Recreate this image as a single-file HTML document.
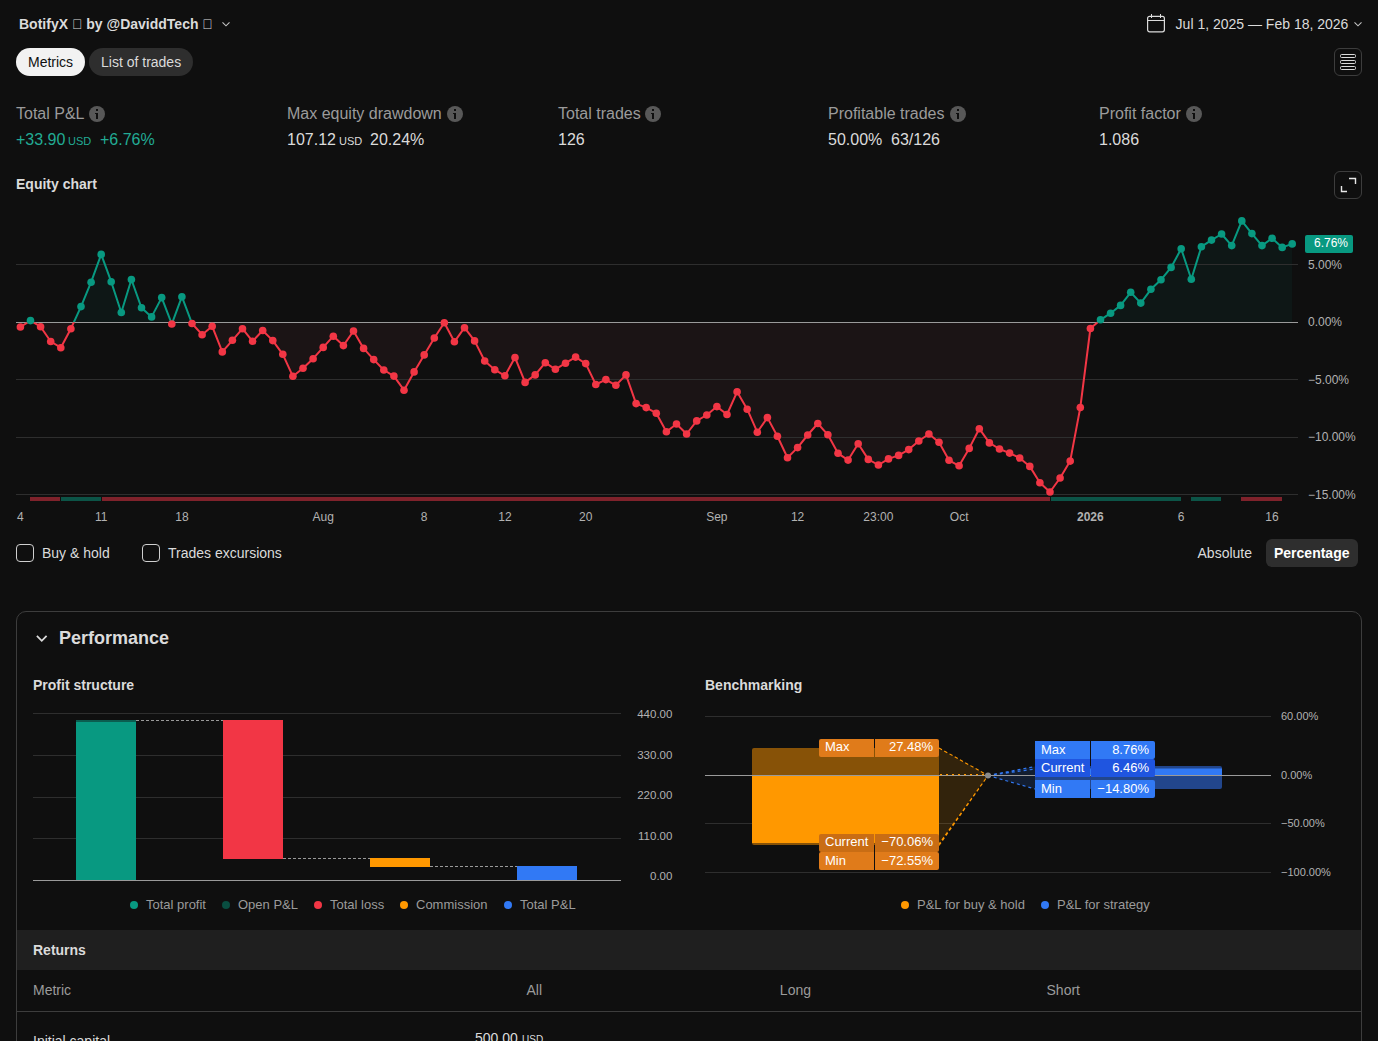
<!DOCTYPE html>
<html><head><meta charset="utf-8"><style>
html,body{margin:0;padding:0;background:#0f0f0f;width:1378px;height:1041px;overflow:hidden;position:relative}
body{font-family:"Liberation Sans",sans-serif}
.a{position:absolute;box-sizing:content-box}
.t{position:absolute;line-height:1;white-space:nowrap}
svg.a{overflow:visible}
</style></head><body>
<div class="t" style="left:19px;top:16.85px;font-size:14px;color:#dbdbdb;font-weight:bold;">BotifyX &#xFFFF; by @DaviddTech &#xFFFF;</div>
<svg class="a" style="left:220px;top:18px" width="12" height="12" viewBox="0 0 12 12"><path d="M2.5 4.3 L6 7.8 L9.5 4.3" fill="none" stroke="#c4c4c4" stroke-width="1.1"/></svg>
<svg class="a" style="left:1146px;top:13px" width="20" height="20" viewBox="0 0 20 20"><rect x="1.6" y="3.4" width="16.8" height="15.4" rx="2" fill="none" stroke="#dbdbdb" stroke-width="1.2"/><path d="M1.5 7.5H18.5M5.5 1V5M14.5 1V5" stroke="#dbdbdb" stroke-width="1"/></svg>
<div class="t" style="left:1175.6px;top:16.85px;font-size:14px;color:#dbdbdb;font-weight:normal;">Jul 1, 2025 — Feb 18, 2026</div>
<svg class="a" style="left:1352px;top:18px" width="12" height="12" viewBox="0 0 12 12"><path d="M2.5 4.3 L6 7.8 L9.5 4.3" fill="none" stroke="#c4c4c4" stroke-width="1.1"/></svg>
<div class="a" style="left:16px;top:48px;width:69px;height:28px;border-radius:14px;background:#f2f2f2"></div>
<div class="t" style="left:28px;top:55.05px;font-size:14px;color:#0f0f0f;font-weight:normal;">Metrics</div>
<div class="a" style="left:89px;top:48px;width:104px;height:28px;border-radius:14px;background:#2e2e2e"></div>
<div class="t" style="left:101px;top:55.05px;font-size:14px;color:#dbdbdb;font-weight:normal;">List of trades</div>
<div class="a" style="left:1334px;top:48px;width:26px;height:26px;border-radius:6px;border:1px solid #3d3d3d"></div>
<svg class="a" style="left:1338px;top:52px" width="20" height="20" viewBox="0 0 20 20"><rect x="2.5" y="2.5" width="15" height="3" rx="1" fill="none" stroke="#dbdbdb" stroke-width="1"/><rect x="2.5" y="8.5" width="15" height="3" rx="1" fill="none" stroke="#dbdbdb" stroke-width="1"/><rect x="2.5" y="14.5" width="15" height="3" rx="1" fill="none" stroke="#dbdbdb" stroke-width="1"/></svg>
<div class="t" style="left:16px;top:106.46px;font-size:16px;color:#9b9b9b;font-weight:normal;">Total P&amp;L</div>
<svg class="a" style="left:89px;top:106px" width="16" height="16" viewBox="0 0 16 16"><circle cx="8" cy="8" r="8" fill="#585858"/><rect x="7" y="3" width="2" height="2" fill="#0f0f0f"/><path d="M6 7H9V13H7V8H6Z" fill="#0f0f0f"/></svg>
<div class="t" style="left:287px;top:106.46px;font-size:16px;color:#9b9b9b;font-weight:normal;">Max equity drawdown</div>
<svg class="a" style="left:447px;top:106px" width="16" height="16" viewBox="0 0 16 16"><circle cx="8" cy="8" r="8" fill="#585858"/><rect x="7" y="3" width="2" height="2" fill="#0f0f0f"/><path d="M6 7H9V13H7V8H6Z" fill="#0f0f0f"/></svg>
<div class="t" style="left:558px;top:106.46px;font-size:16px;color:#9b9b9b;font-weight:normal;">Total trades</div>
<svg class="a" style="left:645px;top:106px" width="16" height="16" viewBox="0 0 16 16"><circle cx="8" cy="8" r="8" fill="#585858"/><rect x="7" y="3" width="2" height="2" fill="#0f0f0f"/><path d="M6 7H9V13H7V8H6Z" fill="#0f0f0f"/></svg>
<div class="t" style="left:828px;top:106.46px;font-size:16px;color:#9b9b9b;font-weight:normal;">Profitable trades</div>
<svg class="a" style="left:950px;top:106px" width="16" height="16" viewBox="0 0 16 16"><circle cx="8" cy="8" r="8" fill="#585858"/><rect x="7" y="3" width="2" height="2" fill="#0f0f0f"/><path d="M6 7H9V13H7V8H6Z" fill="#0f0f0f"/></svg>
<div class="t" style="left:1099px;top:106.46px;font-size:16px;color:#9b9b9b;font-weight:normal;">Profit factor</div>
<svg class="a" style="left:1186px;top:106px" width="16" height="16" viewBox="0 0 16 16"><circle cx="8" cy="8" r="8" fill="#585858"/><rect x="7" y="3" width="2" height="2" fill="#0f0f0f"/><path d="M6 7H9V13H7V8H6Z" fill="#0f0f0f"/></svg>
<div class="t" style="left:16px;top:132.46px;font-size:16px;color:#22ab94;font-weight:normal;">+33.90</div>
<div class="t" style="left:68px;top:135.69px;font-size:11px;color:#22ab94;font-weight:normal;">USD</div>
<div class="t" style="left:100px;top:132.46px;font-size:16px;color:#22ab94;font-weight:normal;">+6.76%</div>
<div class="t" style="left:287px;top:132.46px;font-size:16px;color:#dbdbdb;font-weight:normal;">107.12</div>
<div class="t" style="left:339px;top:135.69px;font-size:11px;color:#dbdbdb;font-weight:normal;">USD</div>
<div class="t" style="left:370px;top:132.46px;font-size:16px;color:#dbdbdb;font-weight:normal;">20.24%</div>
<div class="t" style="left:558px;top:132.46px;font-size:16px;color:#dbdbdb;font-weight:normal;">126</div>
<div class="t" style="left:828px;top:132.46px;font-size:16px;color:#dbdbdb;font-weight:normal;">50.00%</div>
<div class="t" style="left:891px;top:132.46px;font-size:16px;color:#dbdbdb;font-weight:normal;">63/126</div>
<div class="t" style="left:1099px;top:132.46px;font-size:16px;color:#dbdbdb;font-weight:normal;">1.086</div>
<div class="t" style="left:16px;top:177.15px;font-size:14px;color:#dbdbdb;font-weight:bold;">Equity chart</div>
<div class="a" style="left:1334px;top:171px;width:26px;height:26px;border-radius:6px;border:1px solid #3d3d3d"></div>
<svg class="a" style="left:1338px;top:175px" width="20" height="20" viewBox="0 0 20 20"><path d="M11 3.5H17.5V9M3.5 11V16.5H9" fill="none" stroke="#e8e8e8" stroke-width="1.4"/></svg>
<svg class="a" style="left:0;top:0" width="1378" height="540" viewBox="0 0 1378 540">
<defs>
<clipPath id="up"><rect x="0" y="0" width="1378" height="322.3"/></clipPath>
<clipPath id="dn"><rect x="0" y="322.3" width="1378" height="300"/></clipPath>
</defs>
<polygon points="20.4,322.3 20.4,327.0 30.5,320.6 40.6,326.7 50.7,341.5 60.8,347.7 70.9,328.7 81.0,306.6 91.1,282.2 101.2,254.4 111.2,281.7 121.3,312.5 131.4,279.5 141.5,307.8 151.6,316.9 161.7,297.6 171.8,324.0 181.9,296.7 192.0,323.5 202.1,334.7 212.2,326.3 222.3,351.9 232.4,340.3 242.5,328.7 252.6,341.3 262.7,330.5 272.8,340.6 282.8,354.3 292.9,376.3 303.0,368.3 313.1,358.7 323.2,347.4 333.3,336.2 343.4,345.6 353.5,331.0 363.6,348.4 373.7,359.6 383.8,370.0 393.9,376.1 404.0,390.2 414.1,371.9 424.2,354.9 434.3,338.0 444.3,322.8 454.4,341.8 464.5,327.7 474.6,340.9 484.7,361.0 494.8,369.7 504.9,375.8 515.0,357.5 525.1,382.4 535.2,374.9 545.3,362.7 555.4,369.3 565.5,363.2 575.6,357.1 585.7,363.6 595.8,384.5 605.9,379.6 615.9,385.3 626.0,374.9 636.1,403.6 646.2,407.6 656.3,413.2 666.4,431.8 676.5,424.0 686.6,434.0 696.7,420.9 706.8,415.0 716.9,406.6 727.0,414.5 737.1,391.8 747.2,409.2 757.3,432.2 767.4,417.6 777.4,436.2 787.5,457.7 797.6,447.6 807.7,435.0 817.8,423.5 827.9,434.8 838.0,453.3 848.1,460.1 858.2,443.7 868.3,459.4 878.4,465.0 888.5,458.9 898.6,455.4 908.7,449.6 918.8,441.0 928.9,434.0 939.0,442.3 949.0,460.3 959.1,465.8 969.2,448.4 979.3,428.7 989.4,442.9 999.5,449.0 1009.6,453.1 1019.7,458.0 1029.8,466.4 1039.9,482.7 1050.0,492.0 1060.1,478.0 1070.2,461.1 1080.3,407.5 1090.4,328.5 1100.5,319.8 1110.6,313.2 1120.6,305.4 1130.7,292.3 1140.8,303.1 1150.9,289.3 1161.0,279.8 1171.1,267.4 1181.2,248.8 1191.3,279.2 1201.4,246.7 1211.5,240.1 1221.6,234.0 1231.7,245.6 1241.8,220.9 1251.9,233.6 1262.0,245.6 1272.1,238.3 1282.2,247.4 1292.2,243.9 1292.2,322.3" fill="rgba(8,153,129,0.06)" clip-path="url(#up)"/>
<polygon points="20.4,322.3 20.4,327.0 30.5,320.6 40.6,326.7 50.7,341.5 60.8,347.7 70.9,328.7 81.0,306.6 91.1,282.2 101.2,254.4 111.2,281.7 121.3,312.5 131.4,279.5 141.5,307.8 151.6,316.9 161.7,297.6 171.8,324.0 181.9,296.7 192.0,323.5 202.1,334.7 212.2,326.3 222.3,351.9 232.4,340.3 242.5,328.7 252.6,341.3 262.7,330.5 272.8,340.6 282.8,354.3 292.9,376.3 303.0,368.3 313.1,358.7 323.2,347.4 333.3,336.2 343.4,345.6 353.5,331.0 363.6,348.4 373.7,359.6 383.8,370.0 393.9,376.1 404.0,390.2 414.1,371.9 424.2,354.9 434.3,338.0 444.3,322.8 454.4,341.8 464.5,327.7 474.6,340.9 484.7,361.0 494.8,369.7 504.9,375.8 515.0,357.5 525.1,382.4 535.2,374.9 545.3,362.7 555.4,369.3 565.5,363.2 575.6,357.1 585.7,363.6 595.8,384.5 605.9,379.6 615.9,385.3 626.0,374.9 636.1,403.6 646.2,407.6 656.3,413.2 666.4,431.8 676.5,424.0 686.6,434.0 696.7,420.9 706.8,415.0 716.9,406.6 727.0,414.5 737.1,391.8 747.2,409.2 757.3,432.2 767.4,417.6 777.4,436.2 787.5,457.7 797.6,447.6 807.7,435.0 817.8,423.5 827.9,434.8 838.0,453.3 848.1,460.1 858.2,443.7 868.3,459.4 878.4,465.0 888.5,458.9 898.6,455.4 908.7,449.6 918.8,441.0 928.9,434.0 939.0,442.3 949.0,460.3 959.1,465.8 969.2,448.4 979.3,428.7 989.4,442.9 999.5,449.0 1009.6,453.1 1019.7,458.0 1029.8,466.4 1039.9,482.7 1050.0,492.0 1060.1,478.0 1070.2,461.1 1080.3,407.5 1090.4,328.5 1100.5,319.8 1110.6,313.2 1120.6,305.4 1130.7,292.3 1140.8,303.1 1150.9,289.3 1161.0,279.8 1171.1,267.4 1181.2,248.8 1191.3,279.2 1201.4,246.7 1211.5,240.1 1221.6,234.0 1231.7,245.6 1241.8,220.9 1251.9,233.6 1262.0,245.6 1272.1,238.3 1282.2,247.4 1292.2,243.9 1292.2,322.3" fill="#1b1415" clip-path="url(#dn)"/>
<rect x="16" y="264" width="1282" height="1" fill="#2e2e2e"/><rect x="16" y="379" width="1282" height="1" fill="#2e2e2e"/><rect x="16" y="437" width="1282" height="1" fill="#2e2e2e"/><rect x="16" y="494" width="1282" height="1" fill="#2e2e2e"/><rect x="16" y="322" width="1282" height="1" fill="#9a9a9a"/>
<polyline points="20.4,327.0 30.5,320.6 40.6,326.7 50.7,341.5 60.8,347.7 70.9,328.7 81.0,306.6 91.1,282.2 101.2,254.4 111.2,281.7 121.3,312.5 131.4,279.5 141.5,307.8 151.6,316.9 161.7,297.6 171.8,324.0 181.9,296.7 192.0,323.5 202.1,334.7 212.2,326.3 222.3,351.9 232.4,340.3 242.5,328.7 252.6,341.3 262.7,330.5 272.8,340.6 282.8,354.3 292.9,376.3 303.0,368.3 313.1,358.7 323.2,347.4 333.3,336.2 343.4,345.6 353.5,331.0 363.6,348.4 373.7,359.6 383.8,370.0 393.9,376.1 404.0,390.2 414.1,371.9 424.2,354.9 434.3,338.0 444.3,322.8 454.4,341.8 464.5,327.7 474.6,340.9 484.7,361.0 494.8,369.7 504.9,375.8 515.0,357.5 525.1,382.4 535.2,374.9 545.3,362.7 555.4,369.3 565.5,363.2 575.6,357.1 585.7,363.6 595.8,384.5 605.9,379.6 615.9,385.3 626.0,374.9 636.1,403.6 646.2,407.6 656.3,413.2 666.4,431.8 676.5,424.0 686.6,434.0 696.7,420.9 706.8,415.0 716.9,406.6 727.0,414.5 737.1,391.8 747.2,409.2 757.3,432.2 767.4,417.6 777.4,436.2 787.5,457.7 797.6,447.6 807.7,435.0 817.8,423.5 827.9,434.8 838.0,453.3 848.1,460.1 858.2,443.7 868.3,459.4 878.4,465.0 888.5,458.9 898.6,455.4 908.7,449.6 918.8,441.0 928.9,434.0 939.0,442.3 949.0,460.3 959.1,465.8 969.2,448.4 979.3,428.7 989.4,442.9 999.5,449.0 1009.6,453.1 1019.7,458.0 1029.8,466.4 1039.9,482.7 1050.0,492.0 1060.1,478.0 1070.2,461.1 1080.3,407.5 1090.4,328.5 1100.5,319.8 1110.6,313.2 1120.6,305.4 1130.7,292.3 1140.8,303.1 1150.9,289.3 1161.0,279.8 1171.1,267.4 1181.2,248.8 1191.3,279.2 1201.4,246.7 1211.5,240.1 1221.6,234.0 1231.7,245.6 1241.8,220.9 1251.9,233.6 1262.0,245.6 1272.1,238.3 1282.2,247.4 1292.2,243.9" fill="none" stroke="#089981" stroke-width="2" stroke-linejoin="round" clip-path="url(#up)"/>
<polyline points="20.4,327.0 30.5,320.6 40.6,326.7 50.7,341.5 60.8,347.7 70.9,328.7 81.0,306.6 91.1,282.2 101.2,254.4 111.2,281.7 121.3,312.5 131.4,279.5 141.5,307.8 151.6,316.9 161.7,297.6 171.8,324.0 181.9,296.7 192.0,323.5 202.1,334.7 212.2,326.3 222.3,351.9 232.4,340.3 242.5,328.7 252.6,341.3 262.7,330.5 272.8,340.6 282.8,354.3 292.9,376.3 303.0,368.3 313.1,358.7 323.2,347.4 333.3,336.2 343.4,345.6 353.5,331.0 363.6,348.4 373.7,359.6 383.8,370.0 393.9,376.1 404.0,390.2 414.1,371.9 424.2,354.9 434.3,338.0 444.3,322.8 454.4,341.8 464.5,327.7 474.6,340.9 484.7,361.0 494.8,369.7 504.9,375.8 515.0,357.5 525.1,382.4 535.2,374.9 545.3,362.7 555.4,369.3 565.5,363.2 575.6,357.1 585.7,363.6 595.8,384.5 605.9,379.6 615.9,385.3 626.0,374.9 636.1,403.6 646.2,407.6 656.3,413.2 666.4,431.8 676.5,424.0 686.6,434.0 696.7,420.9 706.8,415.0 716.9,406.6 727.0,414.5 737.1,391.8 747.2,409.2 757.3,432.2 767.4,417.6 777.4,436.2 787.5,457.7 797.6,447.6 807.7,435.0 817.8,423.5 827.9,434.8 838.0,453.3 848.1,460.1 858.2,443.7 868.3,459.4 878.4,465.0 888.5,458.9 898.6,455.4 908.7,449.6 918.8,441.0 928.9,434.0 939.0,442.3 949.0,460.3 959.1,465.8 969.2,448.4 979.3,428.7 989.4,442.9 999.5,449.0 1009.6,453.1 1019.7,458.0 1029.8,466.4 1039.9,482.7 1050.0,492.0 1060.1,478.0 1070.2,461.1 1080.3,407.5 1090.4,328.5 1100.5,319.8 1110.6,313.2 1120.6,305.4 1130.7,292.3 1140.8,303.1 1150.9,289.3 1161.0,279.8 1171.1,267.4 1181.2,248.8 1191.3,279.2 1201.4,246.7 1211.5,240.1 1221.6,234.0 1231.7,245.6 1241.8,220.9 1251.9,233.6 1262.0,245.6 1272.1,238.3 1282.2,247.4 1292.2,243.9" fill="none" stroke="#f23645" stroke-width="2" stroke-linejoin="round" clip-path="url(#dn)"/>
<circle cx="20.4" cy="327.0" r="3.8" fill="#f23645"/>
<circle cx="30.5" cy="320.6" r="3.8" fill="#089981"/>
<circle cx="40.6" cy="326.7" r="3.8" fill="#f23645"/>
<circle cx="50.7" cy="341.5" r="3.8" fill="#f23645"/>
<circle cx="60.8" cy="347.7" r="3.8" fill="#f23645"/>
<circle cx="70.9" cy="328.7" r="3.8" fill="#f23645"/>
<circle cx="81.0" cy="306.6" r="3.8" fill="#089981"/>
<circle cx="91.1" cy="282.2" r="3.8" fill="#089981"/>
<circle cx="101.2" cy="254.4" r="3.8" fill="#089981"/>
<circle cx="111.2" cy="281.7" r="3.8" fill="#089981"/>
<circle cx="121.3" cy="312.5" r="3.8" fill="#089981"/>
<circle cx="131.4" cy="279.5" r="3.8" fill="#089981"/>
<circle cx="141.5" cy="307.8" r="3.8" fill="#089981"/>
<circle cx="151.6" cy="316.9" r="3.8" fill="#089981"/>
<circle cx="161.7" cy="297.6" r="3.8" fill="#089981"/>
<circle cx="171.8" cy="324.0" r="3.8" fill="#f23645"/>
<circle cx="181.9" cy="296.7" r="3.8" fill="#089981"/>
<circle cx="192.0" cy="323.5" r="3.8" fill="#f23645"/>
<circle cx="202.1" cy="334.7" r="3.8" fill="#f23645"/>
<circle cx="212.2" cy="326.3" r="3.8" fill="#f23645"/>
<circle cx="222.3" cy="351.9" r="3.8" fill="#f23645"/>
<circle cx="232.4" cy="340.3" r="3.8" fill="#f23645"/>
<circle cx="242.5" cy="328.7" r="3.8" fill="#f23645"/>
<circle cx="252.6" cy="341.3" r="3.8" fill="#f23645"/>
<circle cx="262.7" cy="330.5" r="3.8" fill="#f23645"/>
<circle cx="272.8" cy="340.6" r="3.8" fill="#f23645"/>
<circle cx="282.8" cy="354.3" r="3.8" fill="#f23645"/>
<circle cx="292.9" cy="376.3" r="3.8" fill="#f23645"/>
<circle cx="303.0" cy="368.3" r="3.8" fill="#f23645"/>
<circle cx="313.1" cy="358.7" r="3.8" fill="#f23645"/>
<circle cx="323.2" cy="347.4" r="3.8" fill="#f23645"/>
<circle cx="333.3" cy="336.2" r="3.8" fill="#f23645"/>
<circle cx="343.4" cy="345.6" r="3.8" fill="#f23645"/>
<circle cx="353.5" cy="331.0" r="3.8" fill="#f23645"/>
<circle cx="363.6" cy="348.4" r="3.8" fill="#f23645"/>
<circle cx="373.7" cy="359.6" r="3.8" fill="#f23645"/>
<circle cx="383.8" cy="370.0" r="3.8" fill="#f23645"/>
<circle cx="393.9" cy="376.1" r="3.8" fill="#f23645"/>
<circle cx="404.0" cy="390.2" r="3.8" fill="#f23645"/>
<circle cx="414.1" cy="371.9" r="3.8" fill="#f23645"/>
<circle cx="424.2" cy="354.9" r="3.8" fill="#f23645"/>
<circle cx="434.3" cy="338.0" r="3.8" fill="#f23645"/>
<circle cx="444.3" cy="322.8" r="3.8" fill="#f23645"/>
<circle cx="454.4" cy="341.8" r="3.8" fill="#f23645"/>
<circle cx="464.5" cy="327.7" r="3.8" fill="#f23645"/>
<circle cx="474.6" cy="340.9" r="3.8" fill="#f23645"/>
<circle cx="484.7" cy="361.0" r="3.8" fill="#f23645"/>
<circle cx="494.8" cy="369.7" r="3.8" fill="#f23645"/>
<circle cx="504.9" cy="375.8" r="3.8" fill="#f23645"/>
<circle cx="515.0" cy="357.5" r="3.8" fill="#f23645"/>
<circle cx="525.1" cy="382.4" r="3.8" fill="#f23645"/>
<circle cx="535.2" cy="374.9" r="3.8" fill="#f23645"/>
<circle cx="545.3" cy="362.7" r="3.8" fill="#f23645"/>
<circle cx="555.4" cy="369.3" r="3.8" fill="#f23645"/>
<circle cx="565.5" cy="363.2" r="3.8" fill="#f23645"/>
<circle cx="575.6" cy="357.1" r="3.8" fill="#f23645"/>
<circle cx="585.7" cy="363.6" r="3.8" fill="#f23645"/>
<circle cx="595.8" cy="384.5" r="3.8" fill="#f23645"/>
<circle cx="605.9" cy="379.6" r="3.8" fill="#f23645"/>
<circle cx="615.9" cy="385.3" r="3.8" fill="#f23645"/>
<circle cx="626.0" cy="374.9" r="3.8" fill="#f23645"/>
<circle cx="636.1" cy="403.6" r="3.8" fill="#f23645"/>
<circle cx="646.2" cy="407.6" r="3.8" fill="#f23645"/>
<circle cx="656.3" cy="413.2" r="3.8" fill="#f23645"/>
<circle cx="666.4" cy="431.8" r="3.8" fill="#f23645"/>
<circle cx="676.5" cy="424.0" r="3.8" fill="#f23645"/>
<circle cx="686.6" cy="434.0" r="3.8" fill="#f23645"/>
<circle cx="696.7" cy="420.9" r="3.8" fill="#f23645"/>
<circle cx="706.8" cy="415.0" r="3.8" fill="#f23645"/>
<circle cx="716.9" cy="406.6" r="3.8" fill="#f23645"/>
<circle cx="727.0" cy="414.5" r="3.8" fill="#f23645"/>
<circle cx="737.1" cy="391.8" r="3.8" fill="#f23645"/>
<circle cx="747.2" cy="409.2" r="3.8" fill="#f23645"/>
<circle cx="757.3" cy="432.2" r="3.8" fill="#f23645"/>
<circle cx="767.4" cy="417.6" r="3.8" fill="#f23645"/>
<circle cx="777.4" cy="436.2" r="3.8" fill="#f23645"/>
<circle cx="787.5" cy="457.7" r="3.8" fill="#f23645"/>
<circle cx="797.6" cy="447.6" r="3.8" fill="#f23645"/>
<circle cx="807.7" cy="435.0" r="3.8" fill="#f23645"/>
<circle cx="817.8" cy="423.5" r="3.8" fill="#f23645"/>
<circle cx="827.9" cy="434.8" r="3.8" fill="#f23645"/>
<circle cx="838.0" cy="453.3" r="3.8" fill="#f23645"/>
<circle cx="848.1" cy="460.1" r="3.8" fill="#f23645"/>
<circle cx="858.2" cy="443.7" r="3.8" fill="#f23645"/>
<circle cx="868.3" cy="459.4" r="3.8" fill="#f23645"/>
<circle cx="878.4" cy="465.0" r="3.8" fill="#f23645"/>
<circle cx="888.5" cy="458.9" r="3.8" fill="#f23645"/>
<circle cx="898.6" cy="455.4" r="3.8" fill="#f23645"/>
<circle cx="908.7" cy="449.6" r="3.8" fill="#f23645"/>
<circle cx="918.8" cy="441.0" r="3.8" fill="#f23645"/>
<circle cx="928.9" cy="434.0" r="3.8" fill="#f23645"/>
<circle cx="939.0" cy="442.3" r="3.8" fill="#f23645"/>
<circle cx="949.0" cy="460.3" r="3.8" fill="#f23645"/>
<circle cx="959.1" cy="465.8" r="3.8" fill="#f23645"/>
<circle cx="969.2" cy="448.4" r="3.8" fill="#f23645"/>
<circle cx="979.3" cy="428.7" r="3.8" fill="#f23645"/>
<circle cx="989.4" cy="442.9" r="3.8" fill="#f23645"/>
<circle cx="999.5" cy="449.0" r="3.8" fill="#f23645"/>
<circle cx="1009.6" cy="453.1" r="3.8" fill="#f23645"/>
<circle cx="1019.7" cy="458.0" r="3.8" fill="#f23645"/>
<circle cx="1029.8" cy="466.4" r="3.8" fill="#f23645"/>
<circle cx="1039.9" cy="482.7" r="3.8" fill="#f23645"/>
<circle cx="1050.0" cy="492.0" r="3.8" fill="#f23645"/>
<circle cx="1060.1" cy="478.0" r="3.8" fill="#f23645"/>
<circle cx="1070.2" cy="461.1" r="3.8" fill="#f23645"/>
<circle cx="1080.3" cy="407.5" r="3.8" fill="#f23645"/>
<circle cx="1090.4" cy="328.5" r="3.8" fill="#f23645"/>
<circle cx="1100.5" cy="319.8" r="3.8" fill="#089981"/>
<circle cx="1110.6" cy="313.2" r="3.8" fill="#089981"/>
<circle cx="1120.6" cy="305.4" r="3.8" fill="#089981"/>
<circle cx="1130.7" cy="292.3" r="3.8" fill="#089981"/>
<circle cx="1140.8" cy="303.1" r="3.8" fill="#089981"/>
<circle cx="1150.9" cy="289.3" r="3.8" fill="#089981"/>
<circle cx="1161.0" cy="279.8" r="3.8" fill="#089981"/>
<circle cx="1171.1" cy="267.4" r="3.8" fill="#089981"/>
<circle cx="1181.2" cy="248.8" r="3.8" fill="#089981"/>
<circle cx="1191.3" cy="279.2" r="3.8" fill="#089981"/>
<circle cx="1201.4" cy="246.7" r="3.8" fill="#089981"/>
<circle cx="1211.5" cy="240.1" r="3.8" fill="#089981"/>
<circle cx="1221.6" cy="234.0" r="3.8" fill="#089981"/>
<circle cx="1231.7" cy="245.6" r="3.8" fill="#089981"/>
<circle cx="1241.8" cy="220.9" r="3.8" fill="#089981"/>
<circle cx="1251.9" cy="233.6" r="3.8" fill="#089981"/>
<circle cx="1262.0" cy="245.6" r="3.8" fill="#089981"/>
<circle cx="1272.1" cy="238.3" r="3.8" fill="#089981"/>
<circle cx="1282.2" cy="247.4" r="3.8" fill="#089981"/>
<circle cx="1292.2" cy="243.9" r="3.8" fill="#089981"/>
<rect x="30" y="497" width="30" height="4" fill="#7f222b"/><rect x="61" y="497" width="40" height="4" fill="#0c5447"/><rect x="102" y="497" width="948" height="4" fill="#7f222b"/><rect x="1051" y="497" width="130" height="4" fill="#0c5447"/><rect x="1191" y="497" width="30" height="4" fill="#0c5447"/><rect x="1241" y="497" width="41" height="4" fill="#7f222b"/>
</svg>
<div class="t" style="left:1308px;top:258.64px;font-size:12px;color:#b2b2b2;font-weight:normal;">5.00%</div>
<div class="t" style="left:1308px;top:316.44px;font-size:12px;color:#b2b2b2;font-weight:normal;">0.00%</div>
<div class="t" style="left:1308px;top:373.64px;font-size:12px;color:#b2b2b2;font-weight:normal;">−5.00%</div>
<div class="t" style="left:1308px;top:431.14px;font-size:12px;color:#b2b2b2;font-weight:normal;">−10.00%</div>
<div class="t" style="left:1308px;top:488.64px;font-size:12px;color:#b2b2b2;font-weight:normal;">−15.00%</div>
<div class="a" style="left:1305px;top:235px;width:48px;height:18px;border-radius:2px;background:#089981"></div>
<div class="t" style="left:1314px;top:237.04px;font-size:12px;color:#ffffff;font-weight:normal;">6.76%</div>
<div class="t" style="left:-179.6px;width:400px;text-align:center;top:510.84px;font-size:12px;color:#b2b2b2;font-weight:normal;">4</div>
<div class="t" style="left:-98.84800000000001px;width:400px;text-align:center;top:510.84px;font-size:12px;color:#b2b2b2;font-weight:normal;">11</div>
<div class="t" style="left:-18.096000000000004px;width:400px;text-align:center;top:510.84px;font-size:12px;color:#b2b2b2;font-weight:normal;">18</div>
<div class="t" style="left:123.21999999999997px;width:400px;text-align:center;top:510.84px;font-size:12px;color:#b2b2b2;font-weight:normal;">Aug</div>
<div class="t" style="left:224.15999999999997px;width:400px;text-align:center;top:510.84px;font-size:12px;color:#b2b2b2;font-weight:normal;">8</div>
<div class="t" style="left:304.9119999999999px;width:400px;text-align:center;top:510.84px;font-size:12px;color:#b2b2b2;font-weight:normal;">12</div>
<div class="t" style="left:385.664px;width:400px;text-align:center;top:510.84px;font-size:12px;color:#b2b2b2;font-weight:normal;">20</div>
<div class="t" style="left:516.886px;width:400px;text-align:center;top:510.84px;font-size:12px;color:#b2b2b2;font-weight:normal;">Sep</div>
<div class="t" style="left:597.6379999999999px;width:400px;text-align:center;top:510.84px;font-size:12px;color:#b2b2b2;font-weight:normal;">12</div>
<div class="t" style="left:678.3899999999999px;width:400px;text-align:center;top:510.84px;font-size:12px;color:#b2b2b2;font-weight:normal;">23:00</div>
<div class="t" style="left:759.1419999999999px;width:400px;text-align:center;top:510.84px;font-size:12px;color:#b2b2b2;font-weight:normal;">Oct</div>
<div class="t" style="left:890.364px;width:400px;text-align:center;top:510.84px;font-size:12px;color:#b2b2b2;font-weight:normal;"><b>2026</b></div>
<div class="t" style="left:981.21px;width:400px;text-align:center;top:510.84px;font-size:12px;color:#b2b2b2;font-weight:normal;">6</div>
<div class="t" style="left:1072.056px;width:400px;text-align:center;top:510.84px;font-size:12px;color:#b2b2b2;font-weight:normal;">16</div>
<div class="a" style="left:16px;top:544px;width:18px;height:18px;border-radius:4px;border:1.5px solid #cfcfcf;box-sizing:border-box"></div>
<div class="t" style="left:42px;top:546.15px;font-size:14px;color:#dbdbdb;font-weight:normal;">Buy &amp; hold</div>
<div class="a" style="left:142px;top:544px;width:18px;height:18px;border-radius:4px;border:1.5px solid #cfcfcf;box-sizing:border-box"></div>
<div class="t" style="left:168px;top:546.15px;font-size:14px;color:#dbdbdb;font-weight:normal;">Trades excursions</div>
<div class="t" style="right:126px;top:546.15px;font-size:14px;color:#dbdbdb;font-weight:normal;">Absolute</div>
<div class="a" style="left:1266px;top:539px;width:92px;height:28px;border-radius:6px;background:#2e2e2e"></div>
<div class="t" style="left:1274px;top:546.15px;font-size:14px;color:#ffffff;font-weight:bold;">Percentage</div>
<div class="a" style="left:16px;top:611px;width:1344px;height:500px;border-radius:10px;border:1px solid #3d3d3d"></div>
<svg class="a" style="left:34px;top:631px" width="14" height="14" viewBox="0 0 14 14"><path d="M2.9 4.9 L7.75 9.8 L12.6 4.9" fill="none" stroke="#dbdbdb" stroke-width="1.8"/></svg>
<div class="t" style="left:59px;top:628.76px;font-size:18px;color:#dbdbdb;font-weight:bold;">Performance</div>
<div class="t" style="left:33px;top:678.15px;font-size:14px;color:#dbdbdb;font-weight:bold;">Profit structure</div>
<div class="t" style="left:705px;top:678.15px;font-size:14px;color:#dbdbdb;font-weight:bold;">Benchmarking</div>
<svg class="a" style="left:0;top:690px" width="700" height="230" viewBox="0 690 700 230"><rect x="33" y="713.0" width="588" height="1" fill="#2e2e2e"/><rect x="33" y="755.0" width="588" height="1" fill="#2e2e2e"/><rect x="33" y="797.0" width="588" height="1" fill="#2e2e2e"/><rect x="33" y="838.0" width="588" height="1" fill="#2e2e2e"/><rect x="33" y="880" width="588" height="1" fill="#9a9a9a"/><rect x="76" y="720" width="60" height="160" fill="#089981"/><rect x="76" y="720" width="60" height="2" fill="#0b5e50"/><rect x="223" y="720" width="60" height="139" fill="#f23645"/><rect x="370" y="858" width="60" height="9" fill="#ff9800"/><rect x="517" y="866" width="60" height="14" fill="#3179f5"/><path d="M136 720.5H223M283 858.5H370M430 866.5H517" stroke="#9a9a9a" stroke-width="1" stroke-dasharray="3 2"/></svg>
<div class="t" style="right:705.6px;top:709.27px;font-size:11.5px;color:#b2b2b2;font-weight:normal;">440.00</div>
<div class="t" style="right:705.6px;top:750.27px;font-size:11.5px;color:#b2b2b2;font-weight:normal;">330.00</div>
<div class="t" style="right:705.6px;top:790.27px;font-size:11.5px;color:#b2b2b2;font-weight:normal;">220.00</div>
<div class="t" style="right:705.6px;top:831.27px;font-size:11.5px;color:#b2b2b2;font-weight:normal;">110.00</div>
<div class="t" style="right:705.6px;top:871.27px;font-size:11.5px;color:#b2b2b2;font-weight:normal;">0.00</div>
<div class="a" style="left:130px;top:900.5px;width:8px;height:8px;border-radius:4px;background:#089981"></div>
<div class="t" style="left:146px;top:898.00px;font-size:13px;color:#9b9b9b;font-weight:normal;">Total profit</div>
<div class="a" style="left:222px;top:900.5px;width:8px;height:8px;border-radius:4px;background:#094d40"></div>
<div class="t" style="left:238px;top:898.00px;font-size:13px;color:#9b9b9b;font-weight:normal;">Open P&amp;L</div>
<div class="a" style="left:314px;top:900.5px;width:8px;height:8px;border-radius:4px;background:#f23645"></div>
<div class="t" style="left:330px;top:898.00px;font-size:13px;color:#9b9b9b;font-weight:normal;">Total loss</div>
<div class="a" style="left:400px;top:900.5px;width:8px;height:8px;border-radius:4px;background:#ff9800"></div>
<div class="t" style="left:416px;top:898.00px;font-size:13px;color:#9b9b9b;font-weight:normal;">Commission</div>
<div class="a" style="left:504px;top:900.5px;width:8px;height:8px;border-radius:4px;background:#3179f5"></div>
<div class="t" style="left:520px;top:898.00px;font-size:13px;color:#9b9b9b;font-weight:normal;">Total P&amp;L</div>
<svg class="a" style="left:690px;top:690px" width="688" height="230" viewBox="690 690 688 230"><rect x="705" y="716" width="566" height="1" fill="#2e2e2e"/><rect x="705" y="823" width="566" height="1" fill="#2e2e2e"/><rect x="705" y="872" width="566" height="1" fill="#2e2e2e"/><polygon points="939,748 988,775.5 939,844" fill="rgba(255,152,0,0.15)"/><path d="M939 748L988 775.5L939 844M939 845.5L988 775.5" fill="none" stroke="#ff9800" stroke-width="1.1" stroke-dasharray="3.5 2.5"/><rect x="752" y="748" width="187" height="97" rx="2" fill="#875207"/><rect x="752" y="775" width="187" height="68" fill="#ff9800"/><polygon points="988,775.5 1035,766.5 1035,789" fill="rgba(49,121,245,0.15)"/><path d="M988 775.5L1035 766.5M988 775.5L1035 769M988 775.5L1035 789" fill="none" stroke="#3179f5" stroke-width="1.2" stroke-dasharray="3 3"/><rect x="1035" y="766" width="187" height="23" rx="2" fill="#22468c"/><rect x="1035" y="768.5" width="187" height="6.5" fill="#3179f5"/><rect x="705" y="775" width="566" height="1" fill="#9a9a9a"/><path d="M940 774.7H986" fill="none" stroke="#ff9800" stroke-width="1.2" stroke-dasharray="2 4"/><circle cx="988" cy="775.5" r="3" fill="#8a8a8a"/><rect x="819" y="739" width="55" height="18" rx="2" fill="#e07b1a"/><rect x="869" y="739" width="5" height="18" fill="#e07b1a"/><rect x="875" y="739" width="64" height="18" rx="2" fill="#e07b1a"/><rect x="875" y="739" width="5" height="18" fill="#e07b1a"/><rect x="819" y="834" width="55" height="18" rx="2" fill="#c96d14"/><rect x="869" y="834" width="5" height="18" fill="#c96d14"/><rect x="875" y="834" width="64" height="18" rx="2" fill="#c96d14"/><rect x="875" y="834" width="5" height="18" fill="#c96d14"/><rect x="819" y="852" width="55" height="18" rx="2" fill="#e07b1a"/><rect x="869" y="852" width="5" height="18" fill="#e07b1a"/><rect x="875" y="852" width="64" height="18" rx="2" fill="#e07b1a"/><rect x="875" y="852" width="5" height="18" fill="#e07b1a"/><rect x="1035" y="741" width="55" height="18" fill="#3179f5"/><rect x="1091" y="741" width="64" height="18" rx="2" fill="#3179f5"/><rect x="1091" y="741" width="5" height="18" fill="#3179f5"/><rect x="1035" y="759" width="55" height="18" fill="#1f55e0"/><rect x="1091" y="759" width="64" height="18" rx="2" fill="#1f55e0"/><rect x="1091" y="759" width="5" height="18" fill="#1f55e0"/><rect x="1035" y="780" width="55" height="18" fill="#3179f5"/><rect x="1091" y="780" width="64" height="18" rx="2" fill="#3179f5"/><rect x="1091" y="780" width="5" height="18" fill="#3179f5"/></svg>
<div class="t" style="left:825px;top:740.20px;font-size:13px;color:#ffffff;font-weight:normal;">Max</div>
<div class="t" style="right:445px;top:740.20px;font-size:13px;color:#ffffff;font-weight:normal;">27.48%</div>
<div class="t" style="left:825px;top:835.20px;font-size:13px;color:#ffffff;font-weight:normal;">Current</div>
<div class="t" style="right:445px;top:835.20px;font-size:13px;color:#ffffff;font-weight:normal;">−70.06%</div>
<div class="t" style="left:825px;top:854.20px;font-size:13px;color:#ffffff;font-weight:normal;">Min</div>
<div class="t" style="right:445px;top:854.20px;font-size:13px;color:#ffffff;font-weight:normal;">−72.55%</div>
<div class="t" style="left:1041px;top:743.00px;font-size:13px;color:#ffffff;font-weight:normal;">Max</div>
<div class="t" style="right:229px;top:743.00px;font-size:13px;color:#ffffff;font-weight:normal;">8.76%</div>
<div class="t" style="left:1041px;top:761.00px;font-size:13px;color:#ffffff;font-weight:normal;">Current</div>
<div class="t" style="right:229px;top:761.00px;font-size:13px;color:#ffffff;font-weight:normal;">6.46%</div>
<div class="t" style="left:1041px;top:782.00px;font-size:13px;color:#ffffff;font-weight:normal;">Min</div>
<div class="t" style="right:229px;top:782.00px;font-size:13px;color:#ffffff;font-weight:normal;">−14.80%</div>
<div class="t" style="left:1281px;top:710.69px;font-size:11px;color:#b2b2b2;font-weight:normal;">60.00%</div>
<div class="t" style="left:1281px;top:769.69px;font-size:11px;color:#b2b2b2;font-weight:normal;">0.00%</div>
<div class="t" style="left:1281px;top:818.19px;font-size:11px;color:#b2b2b2;font-weight:normal;">−50.00%</div>
<div class="t" style="left:1281px;top:867.19px;font-size:11px;color:#b2b2b2;font-weight:normal;">−100.00%</div>
<div class="a" style="left:901px;top:900.5px;width:8px;height:8px;border-radius:4px;background:#ff9800"></div>
<div class="t" style="left:917px;top:898.00px;font-size:13px;color:#9b9b9b;font-weight:normal;">P&amp;L for buy &amp; hold</div>
<div class="a" style="left:1041px;top:900.5px;width:8px;height:8px;border-radius:4px;background:#3179f5"></div>
<div class="t" style="left:1057px;top:898.00px;font-size:13px;color:#9b9b9b;font-weight:normal;">P&amp;L for strategy</div>
<div class="a" style="left:17px;top:930px;width:1344px;height:40px;background:#1f1f1f"></div>
<div class="t" style="left:33px;top:943.15px;font-size:14px;color:#dbdbdb;font-weight:bold;">Returns</div>
<div class="t" style="left:33px;top:983.15px;font-size:14px;color:#9b9b9b;font-weight:normal;">Metric</div>
<div class="t" style="right:836px;top:983.15px;font-size:14px;color:#9b9b9b;font-weight:normal;">All</div>
<div class="t" style="right:567px;top:983.15px;font-size:14px;color:#9b9b9b;font-weight:normal;">Long</div>
<div class="t" style="right:298px;top:983.15px;font-size:14px;color:#9b9b9b;font-weight:normal;">Short</div>
<div class="a" style="left:17px;top:1011px;width:1344px;height:1px;background:#3d3d3d"></div>
<div class="t" style="left:33px;top:1034.15px;font-size:14px;color:#dbdbdb;font-weight:normal;">Initial capital</div>
<div class="t" style="left:475px;top:1031.15px;font-size:14px;color:#dbdbdb;font-weight:normal;">500.00</div>
<div class="t" style="left:522px;top:1034.54px;font-size:10px;color:#dbdbdb;font-weight:normal;">USD</div>
</body></html>
